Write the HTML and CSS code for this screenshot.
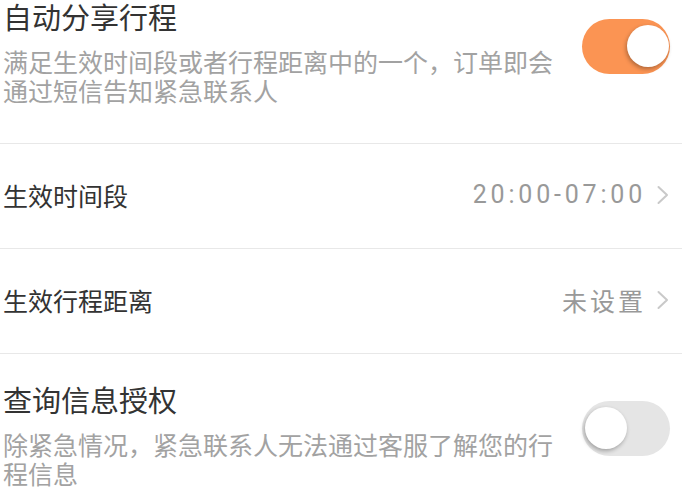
FILE: index.html
```html
<!DOCTYPE html>
<html lang="zh-CN">
<head>
<meta charset="utf-8">
<title>行程分享设置</title>
<link rel="stylesheet" href="styles.css">
</head>
<body>
<div class="list">
  <section class="switch-item switch-item--first">
    <div class="text">
      <div class="title">自动分享行程</div>
      <div class="desc">满足生效时间段或者行程距离中的一个，订单即会通过短信告知紧急联系人</div>
    </div>
    <div class="toggle toggle--on"><span class="knob"></span></div>
  </section>
  <div class="row">
    <span class="label">生效时间段</span>
    <span class="value value--time">20:00-07:00</span>
    <svg class="chevron" width="14" height="20" viewBox="0 0 14 20"><polyline points="2.5,2 11,10 2.5,18" fill="none" stroke="#c9c9c9" stroke-width="2" stroke-linecap="round" stroke-linejoin="round"/></svg>
  </div>
  <div class="row">
    <span class="label">生效行程距离</span>
    <span class="value">未设置</span>
    <svg class="chevron" width="14" height="20" viewBox="0 0 14 20"><polyline points="2.5,2 11,10 2.5,18" fill="none" stroke="#c9c9c9" stroke-width="2" stroke-linecap="round" stroke-linejoin="round"/></svg>
  </div>
  <section class="switch-item switch-item--bordered">
    <div class="text">
      <div class="title">查询信息授权</div>
      <div class="desc">除紧急情况，紧急联系人无法通过客服了解您的行程信息</div>
    </div>
    <div class="toggle"><span class="knob"></span></div>
  </section>
</div>
</body>
</html>
```

FILE: styles.css
```css
html, body {
  margin: 0;
  padding: 0;
  background: #ffffff;
}
body {
  font-family: Roboto, "Noto Sans CJK SC", sans-serif;
  color: #333333;
  width: 682px;
  height: 496px;
  overflow: hidden;
}
.list {
  display: flex;
  flex-direction: column;
}
.switch-item {
  display: flex;
  align-items: flex-start;
  padding: 31px 12px 0 3px;
}
.switch-item--first {
  padding-top: 2px;
  padding-bottom: 36px;
}
.switch-item--bordered {
  border-top: 1px solid #e8e8e8;
}
.text {
  flex: 1;
  min-width: 0;
}
.title {
  font-size: 29px;
  line-height: 34px;
  color: #333333;
}
.desc {
  margin-top: 13px;
  font-size: 25px;
  line-height: 29px;
  color: #a2a2a2;
}
.toggle {
  position: relative;
  flex: none;
  width: 88px;
  height: 55px;
  margin: 16px 0 0 20px;
  border-radius: 28px;
  background: #e5e5e5;
}
.toggle--on {
  background: #fb9453;
  margin-top: 17px;
}
.knob {
  position: absolute;
  top: 6px;
  left: 3px;
  width: 42px;
  height: 42px;
  border-radius: 50%;
  background: #ffffff;
  box-shadow: -1px 2px 4px rgba(0, 0, 0, 0.3);
}
.toggle--on .knob {
  left: auto;
  right: 1px;
}
.row {
  display: flex;
  align-items: center;
  box-sizing: border-box;
  height: 105px;
  padding: 0 12px 3px 3px;
  border-top: 1px solid #e8e8e8;
}
.label {
  font-size: 25px;
  color: #333333;
}
.value {
  margin-left: auto;
  font-size: 25px;
  letter-spacing: 3px;
  color: #999999;
}
.value--time {
  letter-spacing: 3.8px;
}
.chevron {
  flex: none;
  margin-left: 10px;
}
```
